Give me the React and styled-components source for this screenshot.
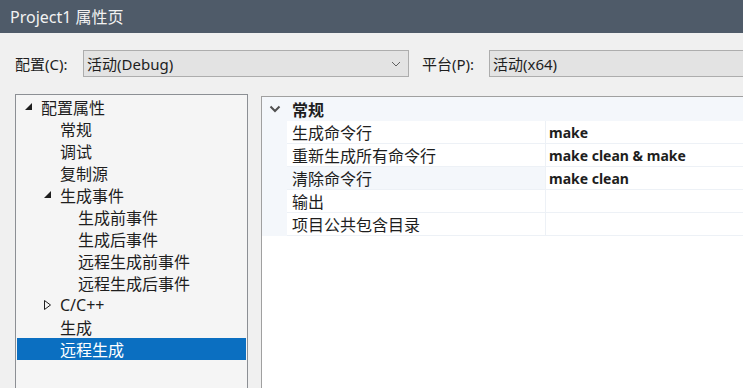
import React from 'react';
import styled, { createGlobalStyle } from 'styled-components';

const GlobalStyle = createGlobalStyle`
  html, body {
    margin: 0;
    padding: 0;
    background: #f0f0f0;
  }
  body {
    font-family: "Noto Sans", "Noto Sans CJK SC", sans-serif;
    font-size: 16px;
    color: #1e1e1e;
    overflow: hidden;
  }
`;

const treeItems = [
  { label: '配置属性', level: 0, expander: 'open' },
  { label: '常规', level: 1 },
  { label: '调试', level: 1 },
  { label: '复制源', level: 1 },
  { label: '生成事件', level: 1, expander: 'open' },
  { label: '生成前事件', level: 2 },
  { label: '生成后事件', level: 2 },
  { label: '远程生成前事件', level: 2 },
  { label: '远程生成后事件', level: 2 },
  { label: 'C/C++', level: 1, expander: 'closed' },
  { label: '生成', level: 1 },
  { label: '远程生成', level: 1, selected: true },
];

const props = [
  { name: '生成命令行', value: 'make' },
  { name: '重新生成所有命令行', value: 'make clean & make' },
  { name: '清除命令行', value: 'make clean', hover: true },
  { name: '输出', value: '' },
  { name: '项目公共包含目录', value: '' },
];

function Expander({ type }) {
  if (type === 'open') {
    return (
      <svg width="8" height="8" viewBox="0 0 8 8">
        <polygon points="7,0 7,7 0,7" fill="#1e1e1e" />
      </svg>
    );
  }
  return (
    <svg width="8" height="10" viewBox="0 0 8 10">
      <polygon points="0.5,0.5 6.5,5 0.5,9.5" fill="none" stroke="#1e1e1e" strokeWidth="1" />
    </svg>
  );
}

function App() {
  return (
    <Window>
      <GlobalStyle />
      <TitleBar>Project1 属性页</TitleBar>

      <ConfigRow>
        <FieldLabel>配置(C):</FieldLabel>
        <Combo width="326px">
          <span>活动(Debug)</span>
          <svg width="10" height="6" viewBox="0 0 10 6">
            <polyline points="1,1 5,5 9,1" fill="none" stroke="#606060" strokeWidth="1" />
          </svg>
        </Combo>
        <FieldLabel className="platform">平台(P):</FieldLabel>
        <Combo grow>
          <span>活动(x64)</span>
        </Combo>
      </ConfigRow>

      <Panels>
        <TreePanel>
          {treeItems.map((item) => (
            <TreeRow key={item.label} level={item.level} selected={item.selected}>
              <ExpanderSlot>{item.expander && <Expander type={item.expander} />}</ExpanderSlot>
              {item.label}
            </TreeRow>
          ))}
        </TreePanel>

        <GridPanel>
          <CategoryRow>
            <Gutter>
              <svg width="12" height="8" viewBox="0 0 12 8">
                <polyline points="1.5,1.5 6,6 10.5,1.5" fill="none" stroke="#505050" strokeWidth="2" />
              </svg>
            </Gutter>
            <CategoryName>常规</CategoryName>
          </CategoryRow>
          {props.map((p) => (
            <PropRow key={p.name}>
              <Gutter />
              <NameCell hover={p.hover}>{p.name}</NameCell>
              <ValueCell>{p.value}</ValueCell>
            </PropRow>
          ))}
        </GridPanel>
      </Panels>
    </Window>
  );
}

const Window = styled.div`
  width: 743px;
  height: 388px;
  display: flex;
  flex-direction: column;
  background: #f0f0f0;
`;

const TitleBar = styled.div`
  height: 33px;
  flex-shrink: 0;
  background: #4f5b69;
  color: #f2f2f2;
  padding-left: 10px;
  display: flex;
  align-items: center;
  font-size: 16px;
  line-height: 1;
`;

const ConfigRow = styled.div`
  margin-top: 17px;
  height: 27px;
  display: flex;
  align-items: center;
  padding-left: 15px;

  .platform {
    width: 67px;
    margin-left: 13px;
  }
`;

const FieldLabel = styled.span`
  width: 68px;
  flex-shrink: 0;
  white-space: nowrap;
  font-size: 15px;
`;

const Combo = styled.div`
  box-sizing: border-box;
  height: 27px;
  width: ${(p) => p.width || 'auto'};
  flex: ${(p) => (p.grow ? '1 0 auto' : '0 0 auto')};
  margin-right: ${(p) => (p.grow ? '-20px' : '0')};
  background: #e3e3e3;
  border: 1px solid #adadad;
  display: flex;
  align-items: center;
  justify-content: space-between;
  padding: 0 7px 0 3px;
  font-size: 15px;
  white-space: nowrap;
`;

const Panels = styled.div`
  flex: 1;
  display: flex;
  margin-top: 17px;
  padding-left: 15px;
  min-height: 0;
`;

const TreePanel = styled.div`
  box-sizing: border-box;
  width: 233px;
  border: 1px solid #8c8f94;
  border-bottom: none;
  background: #f5f5f5;
  padding: 1px 1px 0 1px;
`;

const TreeRow = styled.div`
  height: 22px;
  display: flex;
  align-items: center;
  padding-left: ${(p) => Math.round(8 + p.level * 18.5)}px;
  white-space: nowrap;
  background: ${(p) => (p.selected ? '#0b6fc1' : 'transparent')};
  color: ${(p) => (p.selected ? '#ffffff' : '#1e1e1e')};
`;

const ExpanderSlot = styled.span`
  width: 16px;
  height: 22px;
  display: flex;
  align-items: center;
  padding-bottom: 1px;
  box-sizing: border-box;
`;

const GridPanel = styled.div`
  flex: 1;
  margin-left: 13px;
  margin-top: 2px;
  border-top: 1px solid #a0a0a0;
  border-left: 1px solid #a0a0a0;
  background: #ffffff;
`;

const CategoryRow = styled.div`
  height: 24px;
  display: flex;
  align-items: center;
  background: #f4f7fb;
`;

const Gutter = styled.div`
  width: 25px;
  align-self: stretch;
  flex-shrink: 0;
  background: #f4f7fb;
  display: flex;
  align-items: center;
  justify-content: center;
  padding-left: 1px;
  box-sizing: border-box;
`;

const CategoryName = styled.div`
  padding-left: 5px;
  font-weight: 700;
`;

const PropRow = styled.div`
  height: 23px;
  display: flex;
`;

const NameCell = styled.div`
  box-sizing: border-box;
  width: 259px;
  flex-shrink: 0;
  padding-left: 5px;
  display: flex;
  align-items: center;
  border-bottom: 1px solid #edf1f6;
  border-right: 1px solid #edf1f6;
  background: ${(p) => (p.hover ? '#f4f7fb' : '#ffffff')};
  white-space: nowrap;
`;

const ValueCell = styled.div`
  flex: 1;
  box-sizing: border-box;
  padding-left: 3px;
  display: flex;
  align-items: center;
  border-bottom: 1px solid #edf1f6;
  font-weight: 700;
  font-size: 14px;
  white-space: nowrap;
`;

export default App;
